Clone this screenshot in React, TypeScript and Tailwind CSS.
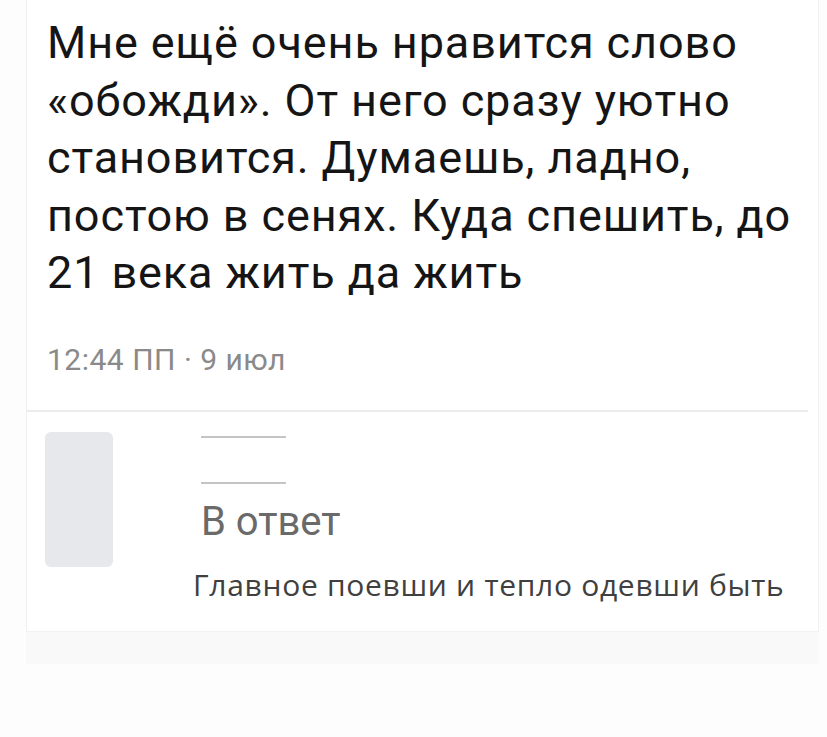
export default function App() {
  const main = ['Мне ещё очень нравится слово', '«обожди». От него сразу уютно', 'становится. Думаешь, ладно,', 'постою в сенях. Куда спешить, до', '21 века жить да жить'];
  return (
    <div className="w-[827px] h-[737px] bg-[#fdfdfd] overflow-hidden" style={{ fontFamily: 'Roboto, "Liberation Sans", sans-serif' }}>
      <div className="ml-[26px] mr-[8px] border-l border-r border-[#f0f0f0] bg-white">
        <div className="pl-[20px] pt-[14px] text-[45px] leading-[57.5px] text-[#151515] tracking-[0.9px]">
          {main.map((l) => (
            <div key={l} className="whitespace-nowrap">{l}</div>
          ))}
        </div>
        <div className="pl-[20px] mt-[42px] text-[30px] leading-[32px] text-[#8a8a8a] tracking-[0.5px]">12:44 ПП · 9 июл</div>
        <div className="mt-[34px] mr-[10px] h-[2px] bg-[#ececec]" />
        <div className="pl-[18px] pt-[20px] pb-[28px] border-b border-[#f2f2f2]">
          <div className="flex">
            <div className="w-[68px] h-[135px] rounded-[6px] bg-[#e7e8eb]" />
            <div className="ml-[88px] flex flex-col">
              <div className="w-[85px] h-[2px] bg-[#c4c4c4] mt-[4px]" />
              <div className="w-[85px] h-[2px] bg-[#c4c4c4] mt-[44px]" />
              <div className="mt-[14px] text-[40px] leading-[48px] text-[#6a6a6a]">В ответ</div>
            </div>
          </div>
          <div
            className="ml-[148px] text-[30px] leading-[36px] text-[#404040] tracking-[0.7px] whitespace-nowrap"
            style={{ fontFamily: '"Open Sans", "Noto Sans", sans-serif' }}
          >
            Главное поевши и тепло одевши быть
          </div>
        </div>
      </div>
      <div className="ml-[26px] mr-[8px] h-[32px] bg-[#f9f9f9]" />
    </div>
  );
}
